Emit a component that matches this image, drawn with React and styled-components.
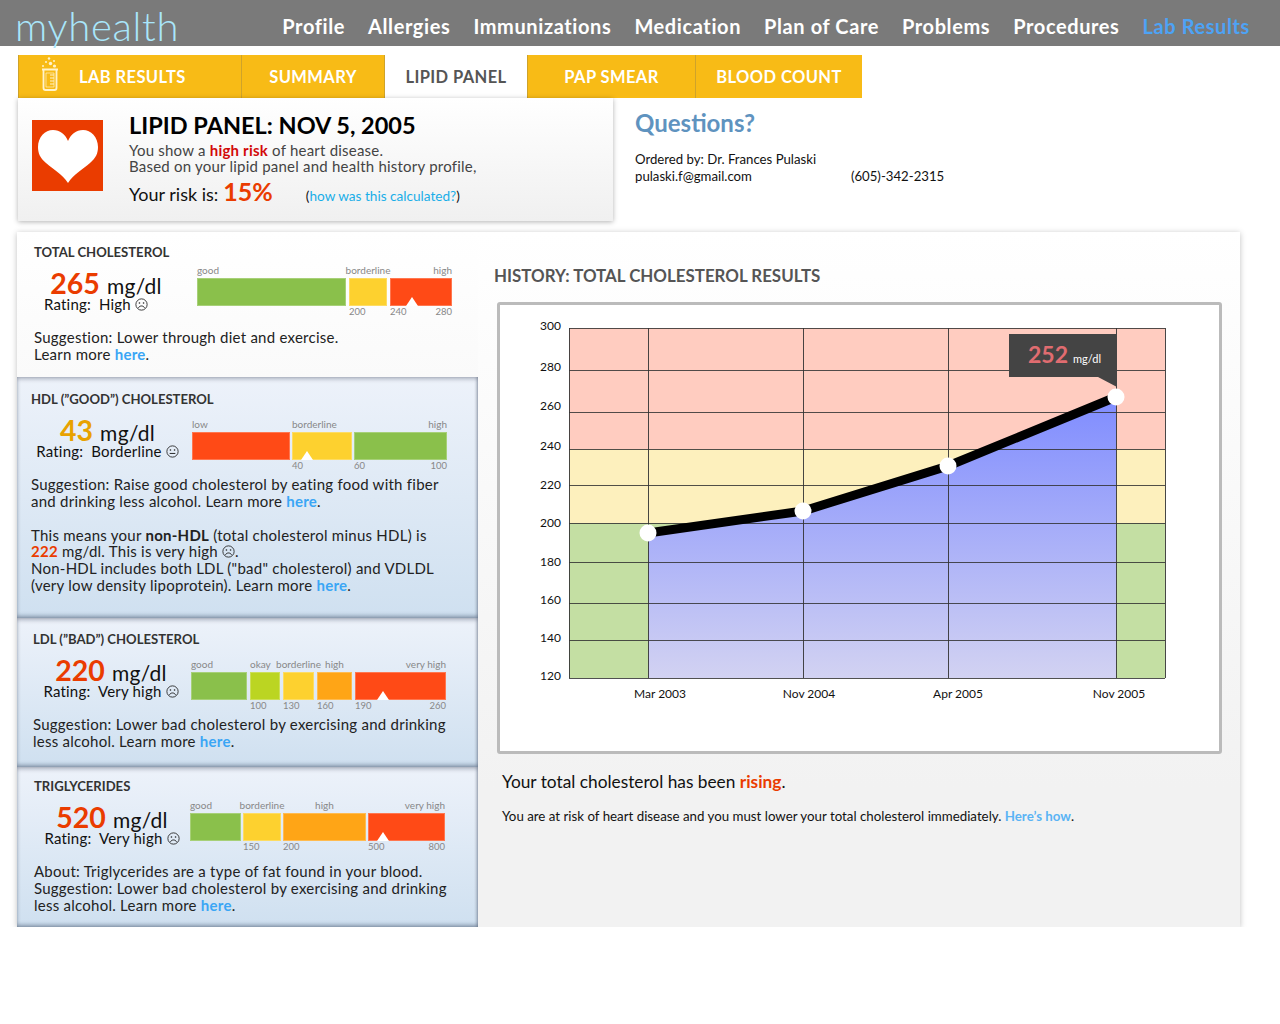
import React from 'react';
import styled, { createGlobalStyle } from 'styled-components'

const navItems = ['Profile', 'Allergies', 'Immunizations', 'Medication', 'Plan of Care', 'Problems', 'Procedures', 'Lab Results']

const tabs = [
    { label: 'LAB RESULTS', width: 223, icon: true },
    { label: 'SUMMARY', width: 143 },
    { label: 'LIPID PANEL', width: 143, active: true },
    { label: 'PAP SMEAR', width: 168 },
    { label: 'BLOOD COUNT', width: 167 },
]

const GREEN = '#8ac04b'
const LIME = '#bbd522'
const YELLOW = '#fdd12f'
const AMBER = '#ffa516'
const RED = '#ff4a16'

const totalGauge = {
    gap: 3,
    segments: [
        { width: 149, color: GREEN, top: 'good' },
        { width: 38, color: YELLOW, top: 'borderline', from: '200', align: 'center' },
        { width: 62, color: RED, top: 'high', from: '240', to: '280', align: 'flex-end', marker: 15 },
    ],
}
const hdlGauge = {
    gap: 2,
    segments: [
        { width: 98, color: RED, top: 'low' },
        { width: 60, color: YELLOW, top: 'borderline', from: '40', marker: 8 },
        { width: 93, color: GREEN, top: 'high', from: '60', to: '100', align: 'flex-end' },
    ],
}
const ldlGauge = {
    gap: 3,
    segments: [
        { width: 56, color: GREEN, top: 'good' },
        { width: 30, color: LIME, top: 'okay', from: '100' },
        { width: 31, color: YELLOW, top: 'borderline', from: '130', align: 'center' },
        { width: 35, color: AMBER, top: 'high', from: '160', align: 'center' },
        { width: 91, color: RED, top: 'very high', from: '190', to: '260', align: 'flex-end', marker: 21 },
    ],
}
const triGauge = {
    gap: 2,
    segments: [
        { width: 51, color: GREEN, top: 'good' },
        { width: 38, color: YELLOW, top: 'borderline', from: '150', align: 'center' },
        { width: 83, color: AMBER, top: 'high', from: '200', align: 'center' },
        { width: 77, color: RED, top: 'very high', from: '500', to: '800', align: 'flex-end', marker: 8 },
    ],
}

const yTicks = [
    { label: 300, line: 328, text: 326 },
    { label: 280, line: 370, text: 367 },
    { label: 260, line: 412, text: 406 },
    { label: 240, line: 449, text: 446 },
    { label: 220, line: 485, text: 485 },
    { label: 200, line: 523, text: 523 },
    { label: 180, line: 562, text: 562 },
    { label: 160, line: 603, text: 600 },
    { label: 140, line: 640, text: 638 },
    { label: 120, line: 678, text: 676 },
]
const points = [
    { x: 648, y: 533, label: 'Mar 2003', labelX: 660 },
    { x: 803, y: 511, label: 'Nov 2004', labelX: 809 },
    { x: 948, y: 466, label: 'Apr 2005', labelX: 958 },
    { x: 1116, y: 397, label: 'Nov 2005', labelX: 1119 },
]

const Face = ({ mood }) => (
    <FaceIcon viewBox="0 0 12 12">
        <circle cx="6" cy="6" r="5.2" fill="none" stroke="#222" strokeWidth="0.8" />
        <circle cx="4.1" cy="4.6" r="0.75" fill="#222" />
        <circle cx="7.9" cy="4.6" r="0.75" fill="#222" />
        {mood === 'sad'
            ? <path d="M3.2 9 C4.4 6.8 7.6 6.8 8.8 9" fill="none" stroke="#222" strokeWidth="0.9" />
            : <path d="M3.4 7.8 H8.6" fill="none" stroke="#222" strokeWidth="0.9" />}
    </FaceIcon>
)

const Beaker = () => (
    <BeakerIcon viewBox="0 0 18 34">
        <g fill="#fff3cc">
            <circle cx="8" cy="1.5" r="1.2" />
            <circle cx="5" cy="5" r="1" />
            <circle cx="9.5" cy="6.5" r="1.7" />
            <circle cx="13" cy="4" r="1" />
            <circle cx="2" cy="9" r="1" />
            <circle cx="13.5" cy="9" r="1.6" />
        </g>
        <path d="M1 12.5 H17 M2.5 12.5 V31 Q2.5 33 4.5 33 H13.5 Q15.5 33 15.5 31 V12.5" fill="none" stroke="#fff3cc" strokeWidth="1.8" />
        <path d="M5 16 H13 V30 H5 Z" fill="none" stroke="#fff3cc" strokeWidth="0.7" />
        <path d="M9 18 H13 M9 21 H13 M9 24 H13 M9 27 H13" stroke="#fff3cc" strokeWidth="1.2" />
    </BeakerIcon>
)

const Heart = () => (
    <HeartIcon viewBox="0 0 60 53">
        <path d="M30 53 C24 44 16 40 8 33 C2 28 0 23 0 17 C0 7 7 0 15 0 C22 0 27 4 30 11 C33 4 38 0 45 0 C53 0 60 7 60 17 C60 23 58 28 52 33 C44 40 36 44 30 53 Z" fill="#fff" />
    </HeartIcon>
)

const Gauge = ({ gauge }) => (
    <GaugeRow $gap={gauge.gap}>
        {gauge.segments.map(seg => (
            <Segment key={seg.top} $width={seg.width}>
                <TopLabel $align={seg.align}>{seg.top}</TopLabel>
                <Bar $color={seg.color}>
                    {seg.marker !== undefined && <Marker $left={seg.marker} />}
                </Bar>
                <BottomLabels>
                    <span>{seg.from}</span>
                    <span>{seg.to}</span>
                </BottomLabels>
            </Segment>
        ))}
    </GaugeRow>
)

const Reading = ({ value, color, rating, mood, width, top, shift }) => (
    <ReadingBlock $width={width} $top={top}>
        <ValueLine><Value $color={color}>{value}</Value> <Unit>mg/dl</Unit></ValueLine>
        <Rating $shift={shift}>Rating:&nbsp; {rating} <Face mood={mood} /></Rating>
    </ReadingBlock>
)

const CholesterolChart = () => {
    const line = points.map(p => `${p.x},${p.y}`).join(' ')
    const area = `${line} 1116,678 648,678`
    return (
        <ChartSvg viewBox="500 305 719 446">
            <defs>
                <linearGradient id="areaFill" gradientUnits="userSpaceOnUse" x1="0" y1="397" x2="0" y2="678">
                    <stop offset="0" stopColor="#7f8cff" />
                    <stop offset="1" stopColor="#d2d2f2" />
                </linearGradient>
            </defs>
            <rect x="569" y="328" width="596" height="121" fill="#ffccc0" />
            <rect x="569" y="449" width="596" height="74" fill="#fdf0bd" />
            <rect x="569" y="523" width="596" height="155" fill="#c4dfa3" />
            <polygon points={area} fill="url(#areaFill)" />
            {yTicks.map(t => (
                <line key={t.label} x1="569" x2="1165" y1={t.line + 0.5} y2={t.line + 0.5} stroke="#333" strokeOpacity="0.85" />
            ))}
            {[569, 648, 803, 948, 1116, 1165].map(x => (
                <line key={x} x1={x + 0.5} x2={x + 0.5} y1="328" y2="678" stroke="#333" strokeOpacity="0.9" />
            ))}
            {yTicks.map(t => (
                <AxisText key={t.label} x="561" y={t.text + 4} textAnchor="end">{t.label}</AxisText>
            ))}
            {points.map(p => (
                <AxisText key={p.label} x={p.labelX} y="698" textAnchor="middle">{p.label}</AxisText>
            ))}
            <polyline points={line} fill="none" stroke="#000" strokeWidth="9" />
            {points.map(p => (
                <circle key={p.label} cx={p.x} cy={p.y} r="8.5" fill="#fff" />
            ))}
            <polygon points="1009,334 1117,334 1117,387 1098,377 1009,377" fill="#444" />
            <TipValue x="1028" y="363">252</TipValue>
            <TipUnit x="1073" y="363">mg/dl</TipUnit>
        </ChartSvg>
    )
}

const App = () => {
    return (
        <>
            <GlobalStyle />
            <Header>
                <Logo>myhealth</Logo>
                <Nav>
                    {navItems.map(item => (
                        <NavLink key={item} $active={item === 'Lab Results'}>{item}</NavLink>
                    ))}
                </Nav>
            </Header>

            <Tabs>
                {tabs.map(tab => (
                    <Tab key={tab.label} $width={tab.width} $active={tab.active} $icon={tab.icon}>
                        {tab.icon && <Beaker />}
                        {tab.label}
                    </Tab>
                ))}
            </Tabs>

            <TopRow>
                <InfoCard>
                    <HeartTile><Heart /></HeartTile>
                    <InfoText>
                        <InfoTitle>LIPID PANEL: NOV 5, 2005</InfoTitle>
                        <InfoLine>You show a <RiskWord>high risk</RiskWord> of heart disease.</InfoLine>
                        <InfoLine>Based on your lipid panel and health history profile,</InfoLine>
                        <RiskRow>
                            <span>Your risk is:</span>
                            <RiskValue>15%</RiskValue>
                            <Calc>(<a>how was this calculated?</a>)</Calc>
                        </RiskRow>
                    </InfoText>
                </InfoCard>
                <Questions>
                    <QuestionsTitle>Questions?</QuestionsTitle>
                    <Contact>Ordered by: Dr. Frances Pulaski</Contact>
                    <ContactRow>
                        <span>pulaski.f@gmail.com</span>
                        <span>(605)-342-2315</span>
                    </ContactRow>
                </Questions>
            </TopRow>

            <Panel>
                <LeftColumn>
                    <Card $height={145} $left={17} $right={26} $top={12} $plain>
                        <CardTitle $gap={4}>TOTAL CHOLESTEROL</CardTitle>
                        <MetricRow>
                            <Reading value="265" color="#ea3c00" rating="High" mood="sad" width={144} top={7} shift={-20} />
                            <Gauge gauge={totalGauge} />
                        </MetricRow>
                        <CardText $gap={9}>
                            Suggestion: Lower through diet and exercise.<br />
                            Learn more <Link>here</Link>.
                        </CardText>
                    </Card>

                    <Card $height={241} $left={14} $right={31} $top={14}>
                        <CardTitle $gap={11}>HDL (”GOOD”) CHOLESTEROL</CardTitle>
                        <MetricRow>
                            <Reading value="43" color="#e8a200" rating="Borderline" mood="neutral" width={153} top={0} />
                            <Gauge gauge={hdlGauge} />
                        </MetricRow>
                        <CardText $gap={2}>
                            Suggestion: Raise good cholesterol by eating food with fiber<br />
                            and drinking less alcohol. Learn more <Link>here</Link>.
                        </CardText>
                        <CardText $gap={17}>
                            This means your <strong>non-HDL</strong> (total cholesterol minus HDL) is<br />
                            <Alert>222</Alert> mg/dl. This is very high <Face mood="sad" />.<br />
                            Non-HDL includes both LDL ("bad" cholesterol) and VDLDL<br />
                            (very low density lipoprotein). Learn more <Link>here</Link>.
                        </CardText>
                    </Card>

                    <Card $height={149} $left={16} $right={32} $top={13}>
                        <CardTitle $gap={11}>LDL (”BAD”) CHOLESTEROL</CardTitle>
                        <MetricRow>
                            <Reading value="220" color="#ea3c00" rating="Very high" mood="sad" width={156} top={0} />
                            <Gauge gauge={ldlGauge} />
                        </MetricRow>
                        <CardText $gap={2}>
                            Suggestion: Lower bad cholesterol by exercising and drinking<br />
                            less alcohol. Learn more <Link>here</Link>.
                        </CardText>
                    </Card>

                    <Card $height={160} $left={17} $right={33} $top={11}>
                        <CardTitle $gap={5}>TRIGLYCERIDES</CardTitle>
                        <MetricRow>
                            <Reading value="520" color="#ea3c00" rating="Very high" mood="sad" width={156} top={6} />
                            <Gauge gauge={triGauge} />
                        </MetricRow>
                        <CardText $gap={8}>
                            About: Triglycerides are a type of fat found in your blood.<br />
                            Suggestion: Lower bad cholesterol by exercising and drinking<br />
                            less alcohol. Learn more <Link>here</Link>.
                        </CardText>
                    </Card>
                </LeftColumn>

                <RightColumn>
                    <HistoryTitle>HISTORY: TOTAL CHOLESTEROL RESULTS</HistoryTitle>
                    <ChartBox><CholesterolChart /></ChartBox>
                    <Summary>Your total cholesterol has been <Rising>rising</Rising>.</Summary>
                    <Advice>You are at risk of heart disease and you must lower your total cholesterol immediately. <AdviceLink>Here’s how</AdviceLink>.</Advice>
                </RightColumn>
            </Panel>
        </>
    );
}

export default App

const GlobalStyle = createGlobalStyle`
    body {
        margin: 0;
        background: #fff;
        color: #111;
        font-family: "Lato", "Liberation Sans", sans-serif;
    }
`

const Header = styled.header`
    height: 46px;
    background: #7a7a7a;
    display: flex;
    align-items: center;
    justify-content: space-between;
    padding: 0 30px 0 15px;
`
const Logo = styled.div`
    font-family: "Lato", sans-serif;
    font-weight: 300;
    font-size: 40px;
    line-height: 46px;
    color: #a9e6fb;
    margin-top: 6px;
    letter-spacing: 0.7px;
`
const Nav = styled.nav`
    display: flex;
    gap: 23px;
    padding-top: 5px;
`
const NavLink = styled.a`
    font-size: 20px;
    font-weight: 700;
    letter-spacing: 0.6px;
    color: ${props => props.$active ? '#4da3f5' : '#fff'};
`

const Tabs = styled.div`
    display: flex;
    margin: 9px 0 0 18px;
`
const Tab = styled.div`
    width: ${props => props.$width}px;
    height: 43px;
    box-sizing: border-box;
    display: flex;
    align-items: center;
    justify-content: ${props => props.$icon ? 'flex-start' : 'center'};
    gap: 20px;
    padding-left: ${props => props.$icon ? '22px' : '0'};
    background: ${props => props.$active ? '#fff' : '#f8bb16'};
    color: ${props => props.$active ? '#555' : '#fff'};
    border-left: 1px solid #cfa32a;
    font-size: 16.5px;
    font-weight: 700;
    letter-spacing: 0.4px;
`
const BeakerIcon = styled.svg`
    width: 18px;
    height: 34px;
    margin-top: -5px;
`

const TopRow = styled.div`
    display: flex;
    margin-left: 18px;
`
const InfoCard = styled.section`
    width: 595px;
    height: 123px;
    box-sizing: border-box;
    display: flex;
    padding: 22px 0 0 14px;
    gap: 26px;
    background: linear-gradient(#fff, #f0f0f0);
    box-shadow: 0 1px 5px rgba(0, 0, 0, 0.3);
    position: relative;
`
const HeartTile = styled.div`
    width: 71px;
    height: 71px;
    background: #ea3c00;
    display: flex;
    align-items: center;
    justify-content: center;
`
const HeartIcon = styled.svg`
    width: 60px;
    height: 53px;
    margin-top: 2px;
`
const InfoText = styled.div`
    margin-top: -10px;
`
const InfoTitle = styled.h1`
    margin: 0 0 2px;
    font-size: 23.5px;
    line-height: 30px;
    font-weight: 700;
    color: #000;
`
const InfoLine = styled.div`
    font-size: 15px;
    line-height: 16px;
    color: #444;
    letter-spacing: 0.22px;
`
const RiskWord = styled.strong`
    color: #d20a0a;
`
const RiskRow = styled.div`
    display: flex;
    align-items: baseline;
    font-size: 18px;
    line-height: 28px;
    margin-top: 3px;
    color: #111;
`
const RiskValue = styled.span`
    font-size: 25px;
    font-weight: 700;
    color: #ea3c00;
    margin-left: 5px;
`
const Calc = styled.span`
    font-size: 13.6px;
    margin-left: 33px;
    a {
        color: #19aee8;
    }
`

const Questions = styled.aside`
    margin: 10px 0 0 22px;
`
const QuestionsTitle = styled.h2`
    margin: 0 0 13px;
    font-size: 24px;
    line-height: 30px;
    font-weight: 700;
    color: #5f93bf;
`
const Contact = styled.div`
    font-size: 13.2px;
    line-height: 17px;
`
const ContactRow = styled(Contact)`
    display: flex;
    gap: 99px;
`

const Panel = styled.main`
    display: flex;
    width: 1223px;
    height: 695px;
    margin: 11px 0 0 17px;
    box-shadow: 0 1px 6px rgba(0, 0, 0, 0.25);
`
const LeftColumn = styled.div`
    width: 461px;
    flex: none;
`
const Card = styled.section`
    height: ${props => props.$height}px;
    box-sizing: border-box;
    padding: ${props => props.$top}px ${props => props.$right}px 0 ${props => props.$left}px;
    background: ${props => props.$plain ? 'linear-gradient(#fff, #fafafa)' : 'linear-gradient(#edf2fa, #cfe0f0)'};
    box-shadow: ${props => props.$plain ? 'none' : 'inset 0 3px 4px -1px rgba(90, 100, 120, 0.45), inset 0 -3px 4px -1px rgba(70, 85, 110, 0.55), inset -2px 0 3px -1px rgba(90, 100, 120, 0.4)'};
`
const CardTitle = styled.h3`
    margin: 0 0 ${props => props.$gap}px;
    font-size: 13.1px;
    line-height: 17px;
    font-weight: 700;
    color: #333;
`
const MetricRow = styled.div`
    display: flex;
    justify-content: space-between;
    height: 55px;
`
const ReadingBlock = styled.div`
    width: ${props => props.$width}px;
    margin-top: ${props => props.$top}px;
    text-align: center;
    white-space: nowrap;
`
const ValueLine = styled.div`
    height: 21px;
    line-height: 22px;
`
const Value = styled.span`
    font-size: 28.5px;
    font-weight: 700;
    margin-right: 3px;
    color: ${props => props.$color};
`
const Unit = styled.span`
    font-size: 21px;
    letter-spacing: 0.3px;
`
const Rating = styled.div`
    font-size: 15px;
    line-height: 22px;
    letter-spacing: 0.2px;
    margin-left: ${props => props.$shift || 0}px;
`
const FaceIcon = styled.svg`
    width: 13px;
    height: 13px;
    vertical-align: -1px;
`
const GaugeRow = styled.div`
    display: flex;
    gap: ${props => props.$gap}px;
`
const Segment = styled.div`
    width: ${props => props.$width}px;
    display: flex;
    flex-direction: column;
`
const TopLabel = styled.div`
    display: flex;
    justify-content: ${props => props.$align || 'flex-start'};
    height: 13px;
    font-size: 10px;
    line-height: 10px;
    color: #888;
    white-space: nowrap;
`
const Bar = styled.div`
    position: relative;
    height: 28px;
    box-sizing: border-box;
    background: ${props => props.$color};
    border: 1px solid rgba(255, 255, 255, 0.25);
`
const Marker = styled.div`
    position: absolute;
    bottom: -1px;
    left: ${props => props.$left}px;
    width: 0;
    height: 0;
    border-left: 6px solid transparent;
    border-right: 6px solid transparent;
    border-bottom: 9px solid #fff;
`
const BottomLabels = styled.div`
    display: flex;
    justify-content: space-between;
    font-size: 9.5px;
    line-height: 12px;
    color: #888;
    white-space: nowrap;
`
const CardText = styled.p`
    margin: ${props => props.$gap}px 0 0;
    font-size: 15px;
    line-height: 16.8px;
    letter-spacing: 0.25px;
    color: #222;
    white-space: nowrap;
`
const Link = styled.a`
    color: #3aa6f5;
    font-weight: 700;
`
const Alert = styled.strong`
    color: #ea3c00;
`

const RightColumn = styled.div`
    flex: 1;
    box-sizing: border-box;
    padding: 32px 0 0 16px;
    background: linear-gradient(#fff, #f2f2f2 80%);
`
const HistoryTitle = styled.h2`
    margin: 0 0 14px;
    font-size: 16.9px;
    line-height: 24px;
    font-weight: 700;
    color: #555;
`
const ChartBox = styled.div`
    width: 725px;
    height: 452px;
    margin-left: 3px;
    box-sizing: border-box;
    background: #fff;
    border: 3px solid #bbb;
    border-radius: 3px;
`
const ChartSvg = styled.svg`
    display: block;
    width: 719px;
    height: 446px;
`
const AxisText = styled.text`
    font-family: "Lato", sans-serif;
    font-size: 12px;
    fill: #111;
`
const TipValue = styled.text`
    font-family: "Lato", sans-serif;
    font-size: 23px;
    font-weight: 700;
    fill: #e06c70;
`
const TipUnit = styled.text`
    font-family: "Lato", sans-serif;
    font-size: 11px;
    fill: #fff;
`
const Summary = styled.p`
    margin: 17px 0 0 8px;
    font-size: 17.3px;
    line-height: 22px;
    color: #111;
`
const Rising = styled.strong`
    color: #ea3c00;
`
const Advice = styled.p`
    margin: 14px 0 0 8px;
    font-size: 13.3px;
    line-height: 18px;
    color: #111;
`
const AdviceLink = styled.a`
    color: #5ab4f5;
    font-weight: 700;
`
